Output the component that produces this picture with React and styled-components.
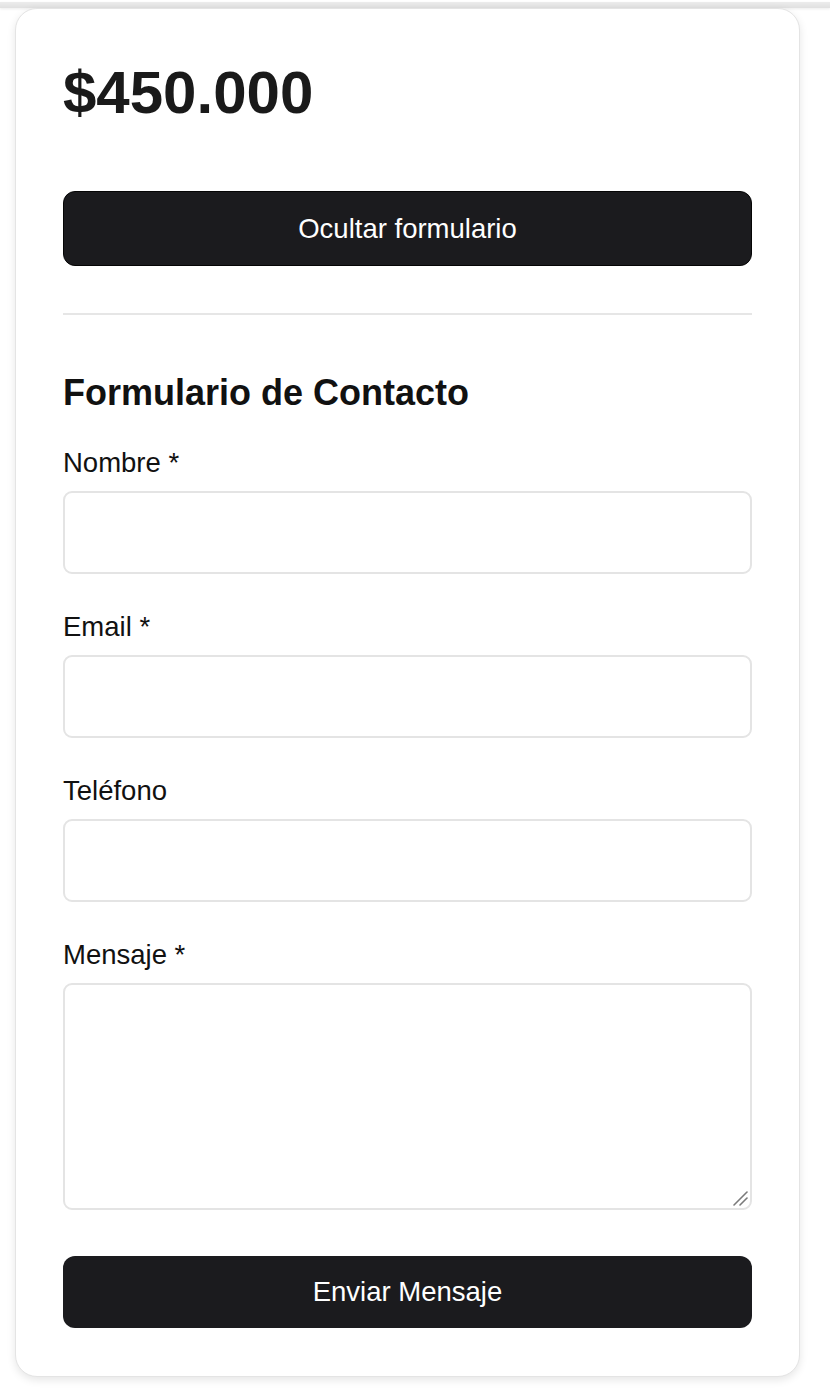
import React from "react";
import styled, { createGlobalStyle } from "styled-components";

const Global = createGlobalStyle`
  html, body { margin: 0; padding: 0; background: #ffffff; }
  body { font-family: "Liberation Sans", Arial, Helvetica, sans-serif; color: #111111; }
  * { box-sizing: border-box; }
`;

const Page = styled.div`
  width: 830px;
  min-height: 1388px;
  background: #ffffff;
  overflow: hidden;
`;

const PrevEdge = styled.div`
  height: 6px;
  margin-top: 2px;
  background: linear-gradient(#ececec, #e0e0e0);
  box-shadow: 0 1px 3px rgba(0, 0, 0, 0.08);
`;

const Card = styled.section`
  margin: 0 30px 0 15px;
  width: 785px;
  height: 1369px;
  background: #ffffff;
  border: 1px solid #e4e4e4;
  border-radius: 22px;
  box-shadow: 0 3px 9px rgba(0, 0, 0, 0.1);
  padding: 48px 47px 48px 47px;
  display: flex;
  flex-direction: column;
`;

const Price = styled.h1`
  margin: 0 0 62px;
  font-size: 60px;
  line-height: 72px;
  font-weight: 700;
  color: #1a1a1a;
`;

const DarkButton = styled.button`
  width: 100%;
  height: ${(p) => p.$h}px;
  border-radius: 12px;
  border: ${(p) => (p.$outlined ? "1.5px solid #050505" : "none")};
  background: #1b1b1e;
  color: #ffffff;
  font-family: "Liberation Sans", Arial, sans-serif;
  font-size: 27.5px;
  display: flex;
  align-items: center;
  justify-content: center;
  cursor: pointer;
  padding: 0;
`;

const Divider = styled.hr`
  border: none;
  border-top: 2px solid #e6e6e6;
  margin: 47px 0 0;
  width: 100%;
`;

const Heading = styled.h2`
  margin: 58px 0 0;
  font-size: 36px;
  line-height: 40px;
  font-weight: 700;
  color: #111111;
`;

const Form = styled.form`
  display: flex;
  flex-direction: column;
  margin-top: 34px;
`;

const Field = styled.div`
  display: flex;
  flex-direction: column;
  margin-bottom: 37px;
`;

const Label = styled.label`
  font-size: 27.5px;
  line-height: 32px;
  color: #111111;
  margin-bottom: 12px;
`;

const Input = styled.input`
  width: 100%;
  height: 83px;
  border: 2px solid #e4e4e4;
  border-radius: 9px;
  background: #ffffff;
  font-size: 27px;
  font-family: inherit;
  padding: 0 20px;
  outline: none;
`;

const AreaWrap = styled.div`
  position: relative;
  width: 100%;
`;

const TextArea = styled.textarea`
  display: block;
  width: 100%;
  height: 227px;
  border: 2px solid #e4e4e4;
  border-radius: 9px;
  background: #ffffff;
  font-size: 27px;
  font-family: inherit;
  padding: 16px 20px;
  resize: none;
  outline: none;
`;

const Grip = styled.svg`
  position: absolute;
  right: 3px;
  bottom: 3px;
  width: 17px;
  height: 17px;
  pointer-events: none;
`;

const SubmitRow = styled.div`
  margin-top: 9px;
`;

export default function App() {
  return (
    <Page>
      <Global />
      <PrevEdge />
      <Card>
        <Price>$450.000</Price>
        <DarkButton type="button" $h={75} $outlined>
          Ocultar formulario
        </DarkButton>
        <Divider />
        <Heading>Formulario de Contacto</Heading>
        <Form onSubmit={(e) => e.preventDefault()}>
          <Field>
            <Label htmlFor="nombre">Nombre *</Label>
            <Input id="nombre" type="text" />
          </Field>
          <Field>
            <Label htmlFor="email">Email *</Label>
            <Input id="email" type="email" />
          </Field>
          <Field>
            <Label htmlFor="tel">Teléfono</Label>
            <Input id="tel" type="tel" />
          </Field>
          <Field>
            <Label htmlFor="msg">Mensaje *</Label>
            <AreaWrap>
              <TextArea id="msg" />
              <Grip viewBox="0 0 17 17">
                <line x1="2" y1="15" x2="15" y2="2" stroke="#7a7a7a" strokeWidth="1.6" strokeLinecap="round" />
                <line x1="8" y1="15" x2="15" y2="8" stroke="#7a7a7a" strokeWidth="1.6" strokeLinecap="round" />
              </Grip>
            </AreaWrap>
          </Field>
          <SubmitRow>
            <DarkButton type="submit" $h={72}>
              Enviar Mensaje
            </DarkButton>
          </SubmitRow>
        </Form>
      </Card>
    </Page>
  );
}
